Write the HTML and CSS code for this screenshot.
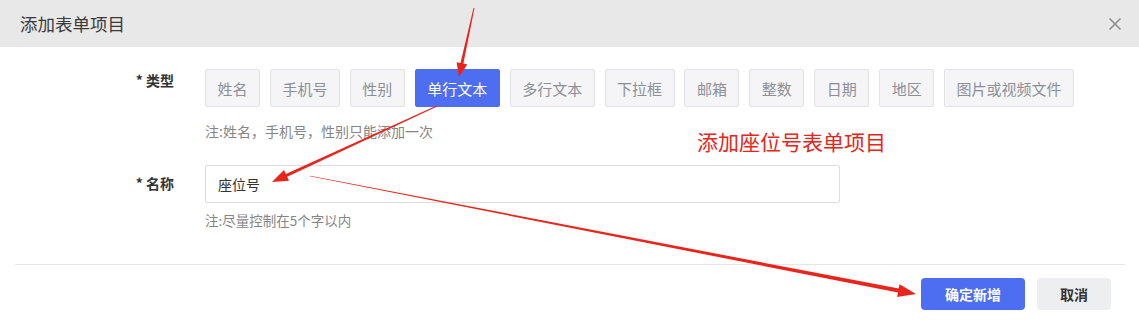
FILE: index.html
```html
<!DOCTYPE html>
<html lang="zh-CN">
<head>
<meta charset="utf-8">
<title>添加表单项目</title>
<link rel="stylesheet" href="styles.css">
</head>
<body>
<div class="dialog">
  <div class="header">
    <span class="title">添加表单项目</span>
    <svg class="close" width="12" height="12" viewBox="0 0 12 12"><path d="M0.5 0.5 L11.5 11.5 M11.5 0.5 L0.5 11.5" stroke="#8a8a8a" stroke-width="1.5" fill="none"/></svg>
  </div>
  <div class="body">
    <div class="row">
      <div class="label label-top">* 类型</div>
      <div class="field">
        <div class="types">
          <span class="type">姓名</span>
          <span class="type">手机号</span>
          <span class="type">性别</span>
          <span class="type active">单行文本</span>
          <span class="type">多行文本</span>
          <span class="type">下拉框</span>
          <span class="type">邮箱</span>
          <span class="type">整数</span>
          <span class="type">日期</span>
          <span class="type">地区</span>
          <span class="type">图片或视频文件</span>
        </div>
        <div class="hint hint-1">注:姓名，手机号，性别只能添加一次</div>
      </div>
    </div>
    <div class="row row-2">
      <div class="label label-mid">* 名称</div>
      <div class="field">
        <input class="input" type="text" value="座位号">
        <div class="hint hint-2">注:尽量控制在5个字以内</div>
      </div>
    </div>
  </div>
  <div class="footer">
    <button class="btn primary">确定新增</button>
    <button class="btn cancel">取消</button>
  </div>

  <div class="note">添加座位号表单项目</div>
  <svg class="arrows" width="1139" height="324" viewBox="0 0 1139 324">
    <polygon fill="#e8241b" points="473.5,7.9 474.5,8.1 463.4,63.6 467.3,64.5 459,77 456.6,62.2 460.5,63.0"/>
    <polygon fill="#e8241b" points="436.8,105.5 437.2,106.5 287.2,176.8 289.0,180.8 272,182 284.0,169.9 285.9,173.9"/>
    <polygon fill="#e8241b" points="310.06,175.71 898.71,288.6 899.57,284.18 916,294 897.09,296.94 897.95,292.52 309.94,176.29"/>
  </svg>
</div>
</body>
</html>
```

FILE: styles.css
```css
* {
  box-sizing: border-box;
}

html, body {
  margin: 0;
  padding: 0;
  background: #ffffff;
}

body {
  font-family: "Noto Sans CJK SC", "Noto Sans", "Liberation Sans", sans-serif;
  color: #333;
}

.dialog {
  position: relative;
  width: 1139px;
  height: 324px;
  background: #fff;
  overflow: hidden;
}

.header {
  height: 47px;
  background: #e8e8e8;
  display: flex;
  align-items: center;
  justify-content: space-between;
  padding: 0 18px 0 20px;
}

.title {
  font-size: 17.5px;
  color: #3a3a3a;
  line-height: 24px;
}

.close {
  display: block;
}

.body {
  padding: 22px 0 34px 0;
}

.row {
  display: grid;
  grid-template-columns: 174px 1fr;
  column-gap: 31px;
}

.row-2 {
  margin-top: 24px;
}

.label {
  text-align: right;
  font-size: 14px;
  font-weight: bold;
  color: #333;
  white-space: nowrap;
}

.label-top {
  line-height: 22px;
}

.label-mid {
  line-height: 36px;
}

.types {
  display: flex;
  gap: 9.9px;
}

.type {
  display: flex;
  align-items: center;
  height: 38px;
  padding: 0 11.5px;
  border: 1px solid #e2e2e4;
  border-radius: 2px;
  background: #f5f5f7;
  color: #8b8f98;
  font-size: 15px;
  white-space: nowrap;
}

.type.active {
  background: #4e6ef2;
  border-color: #4e6ef2;
  color: #ffffff;
}

.hint {
  line-height: 20px;
  color: #858585;
}

.hint-1 {
  margin-top: 14px;
  font-size: 14px;
}

.hint-2 {
  margin-top: 7px;
  font-size: 13.5px;
}

.input {
  display: block;
  width: 635px;
  height: 38px;
  padding: 0 12px;
  border: 1px solid #dddddd;
  border-radius: 2px;
  font-family: "Noto Sans CJK SC", "Noto Sans", sans-serif;
  font-size: 14px;
  color: #333;
  background: #fff;
  outline: none;
}

.footer {
  margin: 0 14px 0 15px;
  border-top: 1px solid #e6e6e6;
  padding: 13px 14px 0 0;
  display: flex;
  justify-content: flex-end;
  gap: 12px;
}

.btn {
  height: 32px;
  border: none;
  border-radius: 4px;
  font-family: "Noto Sans CJK SC", "Noto Sans", sans-serif;
  font-size: 14px;
  font-weight: bold;
  cursor: pointer;
}

.btn.primary {
  width: 104px;
  background: #4e6ef2;
  color: #ffffff;
}

.btn.cancel {
  width: 74px;
  background: #eceef0;
  color: #333;
}

.note {
  position: absolute;
  left: 697px;
  top: 128px;
  font-size: 21px;
  line-height: 26px;
  color: #e8241b;
  white-space: nowrap;
}

.arrows {
  position: absolute;
  left: 0;
  top: 0;
  pointer-events: none;
}
```
